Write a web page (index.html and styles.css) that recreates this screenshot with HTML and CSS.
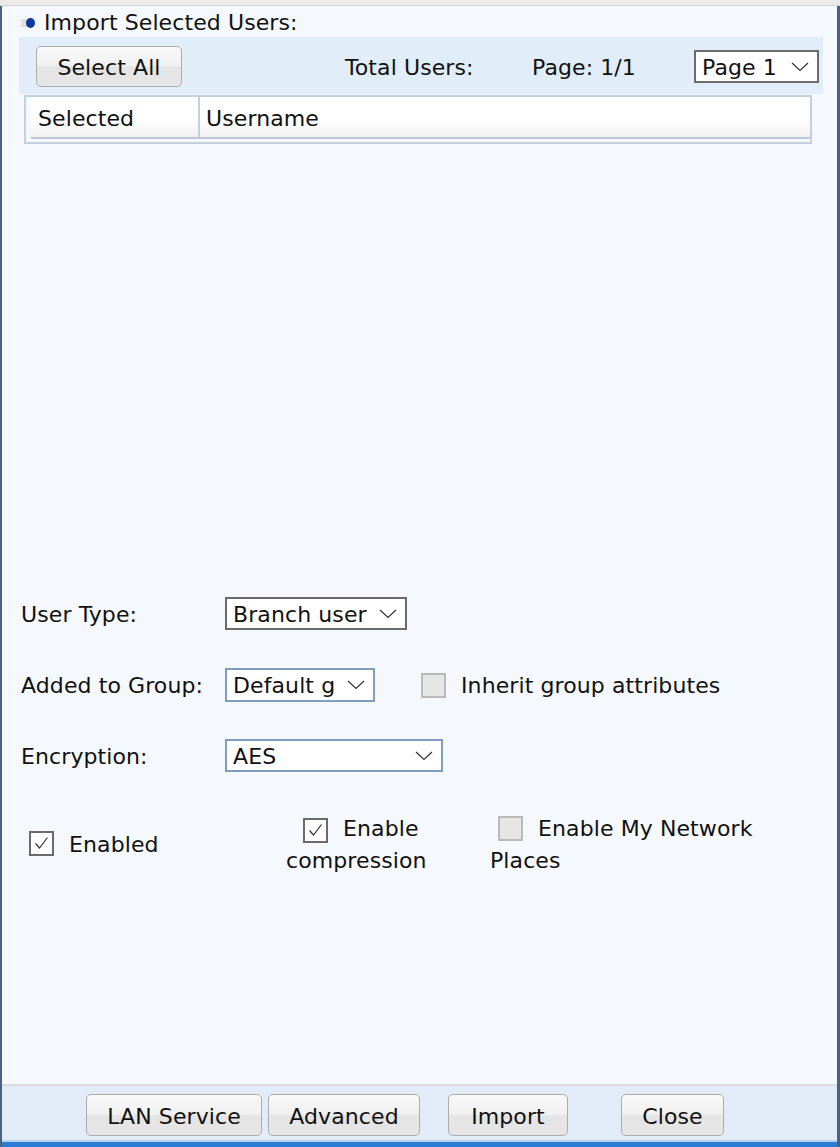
FILE: index.html
```html
<!DOCTYPE html>
<html>
<head>
<meta charset="utf-8">
<link rel="stylesheet" href="styles.css">
</head>
<body>
<div class="topband"></div>
<div class="window">
  <div class="main">
    <div class="title">
      <span class="bullet-bg"></span><span class="bullet"></span>
      <span class="title-text">Import Selected Users:</span>
    </div>
    <div class="toolbar">
      <div class="btn btn-select"><span class="txt">Select All</span></div>
      <span class="tb-total txt">Total Users:</span>
      <span class="tb-page txt">Page: 1/1</span>
      <div class="dd dd-page">
        <span class="txt">Page 1</span>
        <svg class="chev" width="18" height="10" viewBox="0 0 18 10"><path d="M1 1 L9 8.5 L17 1" fill="none" stroke="#333" stroke-width="1.2"/></svg>
      </div>
    </div>
    <div class="grid">
      <div class="grid-head">
        <div class="gh-cell gh-first"><span class="txt">Selected</span></div>
        <div class="gh-cell"><span class="txt">Username</span></div>
      </div>
    </div>

    <div class="form">
      <div class="frow">
        <span class="flabel txt">User Type:</span>
        <div class="dd dd-type">
          <span class="txt">Branch user</span>
          <svg class="chev" width="18" height="10" viewBox="0 0 18 10"><path d="M1 1 L9 8.5 L17 1" fill="none" stroke="#333" stroke-width="1.2"/></svg>
        </div>
      </div>
      <div class="frow">
        <span class="flabel txt">Added to Group:</span>
        <div class="dd dd-blue dd-group">
          <span class="txt">Default g</span>
          <svg class="chev" width="18" height="10" viewBox="0 0 18 10"><path d="M1 1 L9 8.5 L17 1" fill="none" stroke="#333" stroke-width="1.2"/></svg>
        </div>
        <span class="cb cb-off cb-inherit"></span>
        <span class="cb-label txt">Inherit group attributes</span>
      </div>
      <div class="frow">
        <span class="flabel txt">Encryption:</span>
        <div class="dd dd-blue dd-enc">
          <span class="txt">AES</span>
          <svg class="chev" width="18" height="10" viewBox="0 0 18 10"><path d="M1 1 L9 8.5 L17 1" fill="none" stroke="#333" stroke-width="1.2"/></svg>
        </div>
      </div>
    </div>

    <div class="checks">
      <div class="ccell ccell-1">
        <span class="cb cb-on"><svg width="21" height="21" viewBox="0 0 21 21"><path d="M4.5 10.5 L8.5 15 L16.5 4.5" fill="none" stroke="#333" stroke-width="1.2"/></svg></span>
        <span class="ctext txt">Enabled</span>
      </div>
      <div class="ccell ccell-2">
        <span class="cb cb-on cb-inline cb-m17"><svg width="21" height="21" viewBox="0 0 21 21"><path d="M4.5 10.5 L8.5 15 L16.5 4.5" fill="none" stroke="#333" stroke-width="1.2"/></svg></span><span class="ctext">Enable compression</span>
      </div>
      <div class="ccell ccell-3">
        <span class="cb cb-off cb-inline cb-m8"></span><span class="ctext">Enable My Network Places</span>
      </div>
    </div>
  </div>
  <div class="footer">
    <div class="btn fbtn fb-lan"><span class="txt">LAN Service</span></div>
    <div class="btn fbtn fb-adv"><span class="txt">Advanced</span></div>
    <div class="btn fbtn fb-imp"><span class="txt">Import</span></div>
    <div class="btn fbtn fb-close"><span class="txt">Close</span></div>
  </div>
</div>
</body>
</html>
```
FILE: styles.css
```css
html, body {
  margin: 0;
  padding: 0;
}
body {
  width: 840px;
  height: 1147px;
  overflow: hidden;
  font-family: "DejaVu Sans", Verdana, sans-serif;
  font-size: 22px;
  letter-spacing: 0.1px;
  color: #111;
  background: #f5f9fd;
}
.txt {
  padding-top: 2px;
}
.topband {
  height: 5px;
  background: #ebebeb;
  border-bottom: 1px solid #d3d3d3;
}
.window {
  height: 1141px;
  box-sizing: border-box;
  border-left: 2px solid #4b6284;
  border-right: 3px solid #4b6284;
  display: flex;
  flex-direction: column;
  background: #f5f9fd;
}
.main {
  flex: 1;
  display: flex;
  flex-direction: column;
}
.title {
  height: 31px;
  display: flex;
  align-items: center;
  padding-left: 19px;
}
.bullet-bg {
  width: 6px;
  height: 8px;
  background: #e2e2e2;
  margin-top: 3px;
}
.bullet {
  width: 9px;
  height: 10px;
  border-radius: 50%;
  background: #0b3a9e;
  margin-left: -1px;
  margin-top: 3px;
}
.title-text {
  margin-left: 9px;
  padding-top: 2px;
}
.toolbar {
  margin-left: 17px;
  width: 804px;
  height: 57px;
  background: #e1edf9;
  display: flex;
  align-items: center;
  box-sizing: border-box;
  padding-left: 17px;
  padding-right: 4px;
}
.btn {
  box-sizing: border-box;
  height: 41px;
  border: 1px solid #acacac;
  border-radius: 5px;
  background: linear-gradient(#f9f9f9, #f1f1f1 48%, #e4e4e4 52%, #e6e6e6);
  display: flex;
  align-items: center;
  justify-content: center;
  color: #111;
}
.btn-select {
  width: 146px;
  margin-top: 2px;
}
.tb-total {
  margin-left: 163px;
  width: 187px;
  margin-top: 2px;
}
.tb-page {
  margin-top: 2px;
}
.dd {
  box-sizing: border-box;
  height: 33px;
  border: 2px solid #6b6b6b;
  background: #fff;
  display: flex;
  align-items: center;
  justify-content: space-between;
  padding-left: 6px;
  padding-right: 8px;
}
.dd-blue {
  border-color: #7f9dbe;
}
.chev {
  display: block;
  margin-top: 1px;
}
.dd-page {
  margin-left: auto;
  width: 125px;
  height: 33px;
  margin-top: 2px;
}
.grid {
  margin-left: 22px;
  margin-top: 1px;
  width: 788px;
  box-sizing: border-box;
  border: 2px solid #c2cfdf;
  padding: 0 0 3px 5px;
}
.grid-head {
  display: grid;
  grid-template-columns: 169px 1fr;
  height: 42px;
  box-sizing: border-box;
  background: linear-gradient(#ffffff 55%, #f1f1f1);
  border-bottom: 2px solid #b9c7da;
}
.gh-cell {
  display: flex;
  align-items: center;
  padding-left: 6px;
}
.gh-first {
  padding-left: 7px;
  border-right: 2px solid #c5d0de;
}
.form {
  margin-top: 453px;
  padding-left: 19px;
  display: flex;
  flex-direction: column;
  gap: 38px;
}
.frow {
  display: flex;
  align-items: center;
  height: 33px;
}
.flabel {
  width: 204px;
}
.dd-type {
  width: 182px;
}
.dd-group {
  width: 150px;
  height: 34px;
}
.dd-enc {
  width: 218px;
}
.cb {
  box-sizing: border-box;
  width: 25px;
  height: 25px;
  flex: none;
  display: inline-flex;
  align-items: center;
  justify-content: center;
}
.cb-on {
  border: 2px solid #6a6a6a;
  background: #fff;
}
.cb-off {
  border: 2px solid #bababa;
  background: #e6e6e6;
}
.cb-inherit {
  margin-left: 46px;
  margin-top: 2px;
}
.cb-label {
  margin-left: 15px;
}
.checks {
  margin-top: 40px;
  padding-left: 19px;
  display: flex;
  align-items: center;
  height: 64px;
  line-height: 32px;
}
.ccell {
  box-sizing: border-box;
}
.ccell-1 {
  width: 265px;
  display: flex;
  align-items: center;
  padding-left: 8px;
  margin-top: -1px;
}
.ccell-1 .ctext {
  margin-left: 15px;
}
.ccell-2 {
  width: 204px;
  padding-top: 1px;
}
.ccell-3 {
  width: 290px;
  padding-top: 1px;
}
.cb-inline {
  vertical-align: -5px;
  margin-right: 15px;
}
.cb-m17 {
  margin-left: 17px;
}
.cb-m8 {
  margin-left: 8px;
}
.footer {
  height: 63px;
  box-sizing: border-box;
  border-top: 2px solid #dcdcdc;
  background: #e1ecf8;
  border-bottom: 5px solid #2b7cd3;
  box-shadow: inset 0 -2px 0 #b8d3f0;
  display: flex;
  align-items: flex-start;
  padding-top: 8px;
}
.fbtn {
  height: 42px;
}
.fb-lan {
  margin-left: 84px;
  width: 176px;
}
.fb-adv {
  margin-left: 6px;
  width: 152px;
}
.fb-imp {
  margin-left: 28px;
  width: 120px;
}
.fb-close {
  margin-left: 53px;
  width: 103px;
}
```
